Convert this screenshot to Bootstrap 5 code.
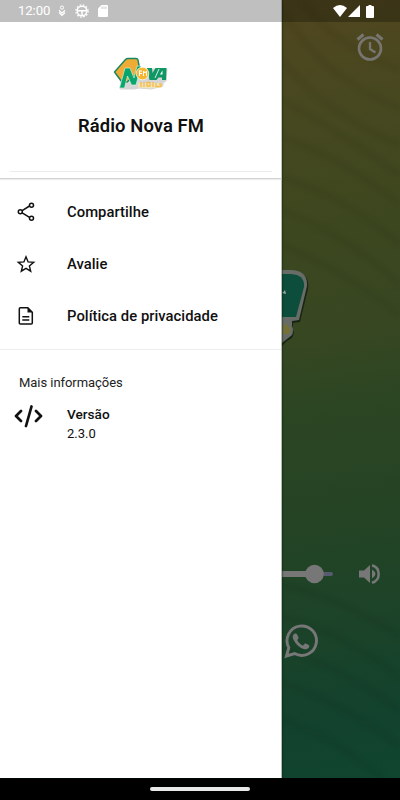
<!DOCTYPE html>
<html lang="pt-BR">
<head>
<meta charset="utf-8">
<meta name="viewport" content="width=device-width, initial-scale=1">
<title>Rádio Nova FM</title>
<link rel="stylesheet" href="https://cdn.jsdelivr.net/npm/bootstrap@5.3.0/dist/css/bootstrap.min.css">
<style>
body{font-family:Roboto,sans-serif;color:#101010;background:#000}
svg{display:block;flex:none}
.phone{width:400px;height:800px}
.app-area{height:778px}
.status{height:22px;background:rgba(0,0,0,.25);z-index:5;padding:0 25px 0 18px;color:#fff}
.clock{font-size:13.2px;line-height:24px;width:39px;letter-spacing:-.1px}
.drawer{width:282px;border-right:1px solid #b4bdb2;box-shadow:0 0 2px #001a08;z-index:2}
.drawer-head{height:179px;padding:56px 9px 0 10px;border-bottom:1px solid #d2d2d2;box-shadow:0 1px 1px #eee}
.station{font-size:18.4px;font-weight:600;line-height:24px;margin-top:22px;letter-spacing:.1px}
.head-line{height:1px;background:#ececec;margin-top:33px}
.entry{height:52px;padding-left:16px;font-size:14.8px;font-weight:500;line-height:20px;letter-spacing:.04px}
.entry svg{margin-right:31px}
.entries{padding:7px 0 7px;border-bottom:1px solid #eee}
.info-title{font-size:13px;line-height:18px;margin:24px 0 0 19px;letter-spacing:-.05px;color:#222}
.version{padding:13px 0 0 14px;font-size:13px;line-height:19px}
.version svg{margin-right:24px}
.version-name{font-weight:500;font-size:13.6px}
.player{background:linear-gradient(172deg,#51461e 0,#474820 14%,#3d471f 29%,#374722 43%,#2c4523 52%,#254424 65%,#1d4328 78%,#13422d 91%,#104530 100%);overflow:hidden}
.waves{inset:0;filter:blur(2px)}
.alarm{margin:32px 0 0 74px}
.art{margin-top:206px}
.volume{margin-top:211px;height:30px}
.whats{margin:35px 0 0 2px}
.navigation{height:22px}
.pill{width:100px;height:4px;background:#e8e8e8}
</style>
<script src="https://cdn.jsdelivr.net/npm/bootstrap@5.3.0/dist/js/bootstrap.bundle.min.js"></script>
</head>
<body class="m-0">
<div class="phone position-relative overflow-hidden">
  <header class="status position-absolute top-0 start-0 w-100 d-flex align-items-center">
    <span class="clock">12:00</span>
    <svg width="10" height="12" viewBox="0 0 10 12" fill="none" stroke="#fff"><circle cx="5" cy="2.600" r="1.600"/><path d="M2 5.300 5 8.200l3-2.900M2 7.500l3 3 3-3" stroke-width="1.200"/></svg>
    <svg class="ms-2" width="14" height="14" viewBox="0 0 14 14" fill="none" stroke="#fff"><circle cx="7" cy="7" r="4.800" stroke-width="1.500"/><circle cx="7" cy="7" r="6.100" stroke-width="1.300" stroke-dasharray="1.600 1.600"/><path d="M2.500 6.800h9M7 7v5" stroke-width="1.500"/></svg>
    <svg width="10" height="12" viewBox="0 0 10 12" style="margin-left:9px"><path d="M3.500 0H9q1 0 1 1v10q0 1-1 1H1q-1 0-1-1V3.500z" fill="#fff"/><path d="M4 1.500V4M6 1.500V4M8 1.500V4" stroke="#c0c0c0" stroke-width=".8"/></svg>
    <svg class="ms-auto" width="14" height="12" viewBox="0 0 14 12"><path d="M0 3Q7-3 14 3L7 12z" fill="#fff"/></svg>
    <svg width="12" height="12" viewBox="0 0 12 12" style="margin-left:1px"><path d="M12 0v12H0z" fill="#fff"/></svg>
    <svg width="8" height="13" viewBox="0 0 8 13" style="margin-left:6px;margin-right:1px"><path d="M2.500 0h3v1H7q1 0 1 1v10q0 1-1 1H1q-1 0-1-1V2q0-1 1-1h1.500z" fill="#fff"/></svg>
  </header>

  <div class="app-area d-flex">
    <aside class="drawer bg-white flex-shrink-0 position-relative">
      <div class="drawer-head text-center">
        <svg class="mx-auto" width="56" height="36" viewBox="0 0 56 36" role="img" aria-label="Nova FM">
          <path d="M2 17 13 4h11l4 9h26l-1 12-3 2v3l-12 3-12-1-5 1H7l1-7z" fill="#d5d5d5" stroke="#d5d5d5" stroke-linejoin="round"/>
          <path d="M1.500 16 12.500 3.500q1-1 2.500-1h8q1.500 0 2 1.500L27 15 14 26H9z" fill="#eeac36" stroke="#168562" stroke-width="1.400"/>
          <path d="M6.500 32 12 12h5l4 10 3-12h4L23 29h-4.500l-4-9-3 12z" fill="#08a66c" stroke="#e9f5e8" stroke-width=".6"/>
          <path d="M25 27h24v4l-12 1.500-12-1z" fill="#f0e4ba"/>
          <path d="M28 26v5m3-5v5m3-4.500h3v3.500h-3zm6-.5v5m3-4v3.500h5v-2.500h-2" stroke="#f4bd52" stroke-width="1.400" fill="none"/>
          <path d="M34 12h5l.5 5 3-5h11l-.5 12h-4v-2.500h-3.500L43.500 24h-7z" fill="#109765"/>
          <path d="m47 18.500 2.500-4v4z" fill="#fff"/><path d="m42 22 4-9" stroke="#fff" stroke-width=".8"/>
          <circle cx="29.500" cy="17.500" r="6.300" fill="#f7b732" stroke="#fff" stroke-width=".7"/>
          <path d="M26.500 15h2.500m-2.500 2.500h2.500M26.500 14.500v5.500m4 0v-5l1.500 2 1.500-2v5" stroke="#fff" fill="none"/>
        </svg>
        <h1 class="station mb-0">Rádio Nova FM</h1>
        <div class="head-line"></div>
      </div>
      <nav class="entries">
        <div class="entry d-flex align-items-center">
          <svg width="20" height="20" viewBox="0 0 20 20" fill="none" stroke="#111" stroke-width="1.500"><path d="m5.800 8.800 7.700-4.800M5.800 10.600l7.700 4.800"/><circle cx="4.300" cy="9.700" r="2"/><circle cx="15.500" cy="3.200" r="2"/><circle cx="15.500" cy="16.200" r="2"/></svg>
          <span>Compartilhe</span>
        </div>
        <div class="entry d-flex align-items-center">
          <svg width="20" height="20" viewBox="0 0 20 20" fill="none" stroke="#111" stroke-width="1.400"><path d="m10 2.800 2.100 5.100 5.600.4-4.300 3.600 1.300 5.300-4.700-2.800-4.700 2.800 1.300-5.300-4.300-3.600 5.600-.4z"/></svg>
          <span>Avalie</span>
        </div>
        <div class="entry d-flex align-items-center">
          <svg width="20" height="20" viewBox="0 0 20 20" fill="none" stroke="#111" stroke-width="1.500"><path d="M4.300 1.700h7.500l4.500 4.500v10.700q0 1-1 1H4.300q-1 0-1-1V2.700q0-1 1-1z"/><path d="M11.500 1.500v5h5z" fill="#111" stroke="none"/><path d="M6.300 10.700h7M6.300 14.100h7"/></svg>
          <span>Política de privacidade</span>
        </div>
      </nav>
      <h2 class="info-title fw-normal">Mais informações</h2>
      <div class="version d-flex align-items-start">
        <svg width="29" height="23" viewBox="0 0 29 23" fill="none" stroke="#111" stroke-width="2.700" stroke-linecap="round" stroke-linejoin="round"><path d="M7 6 2 11l5 5M22 6l5 5-5 5M17.500 1.500 12 21"/></svg>
        <div><div class="version-name">Versão</div><div>2.3.0</div></div>
      </div>
    </aside>

    <main class="player flex-grow-1 position-relative">
      <svg class="waves position-absolute" width="118" height="778" viewBox="0 0 118 778" fill="none" stroke="#000" stroke-opacity=".045" stroke-width="7">
        <path d="M20 0q30 45 98 70M0 10q38 67 118 98M0 60q40 52 118 85M0 100q55 30 118 75M0 137q60 20 118 68M0 177q65 20 118 68M0 210q65 25 118 75M0 245q60 25 118 70M0 585q65 15 118 52M0 617q50 10 118 60M0 650q55 15 118 60M0 683q60 20 118 63M0 720q50 15 100 58"/>
      </svg>
      <svg class="alarm position-relative" width="28" height="30" viewBox="0 0 28 30" fill="none" stroke="#777570" stroke-width="2.600"><circle cx="14" cy="16.500" r="11"/><path d="M14 10v7l5.500 3.500" stroke-width="2.300"/><path d="m1.500 7.500 6-5M26.500 7.500l-6-5" stroke-width="3"/></svg>
      <svg class="art position-relative" width="36" height="80" viewBox="0 0 36 80">
        <path d="M-4 4H13q15 1 13 17L18 54l-7 1v7q2 3-1 8l-5 3-5 5h-5z" fill="#111b12" opacity=".8"/>
        <path d="M-4 2H10q16 1 15 16L17 52l-7 1v5q2 4 0 9l-5 4-5 4z" fill="#686c67"/>
        <path d="M-4 6H9q14 1 13 13L14 49H-4z" fill="#0d4d3b"/>
        <path d="M0 25q2-1 3-3l1 4z" fill="#a3aaa3"/>
        <path d="M0 58v9M2.500 56v10M5 57v9M7.500 59v6" stroke="#7c761b" stroke-width="1.300"/>
      </svg>
      <div class="volume d-flex align-items-center position-relative">
        <svg width="52" height="24" viewBox="0 0 52 24"><path d="M0 12h33" stroke="#777" stroke-width="6"/><path d="M33 12h16" stroke="#565b70" stroke-width="4" stroke-linecap="round"/><circle cx="32.500" cy="12" r="9.300" fill="#777"/></svg>
        <svg width="22" height="22" viewBox="0 0 22 22" style="margin-left:25px"><path d="M0 7.500h5L11 2v18l-6-5.500H0zM13 6.500q7 4.500 0 9z" fill="#777"/><path d="M13 2.200q6.700 2 6.700 8.800T13 19.800" fill="none" stroke="#777" stroke-width="2.500"/></svg>
      </div>
      <svg class="whats position-relative" width="35" height="35" viewBox="0 0 35 35"><path d="m2.500 32 2.300-8.400a14.700 14.700 0 1 1 5.800 5.900z" fill="none" stroke="#777" stroke-width="2.900"/><path d="M12 9.500c-2-.5-3.700 1.900-3.100 4.500.8 4 7 10.700 11.700 11.200 2.500.3 5-1.200 4.700-3.500-.1-.7-3.800-2.500-4.400-2.200-.7.300-1.400 2-2 1.900-1.900-.5-5.100-3.700-5.500-5.200-.1-.6 1.200-1.500 1.200-2.100 0-.7-1.400-4.300-2.600-4.600z" fill="#777"/></svg>
    </main>
  </div>
  <footer class="navigation bg-black d-flex align-items-center justify-content-center"><div class="pill rounded-pill"></div></footer>
</div>
</body>
</html>
